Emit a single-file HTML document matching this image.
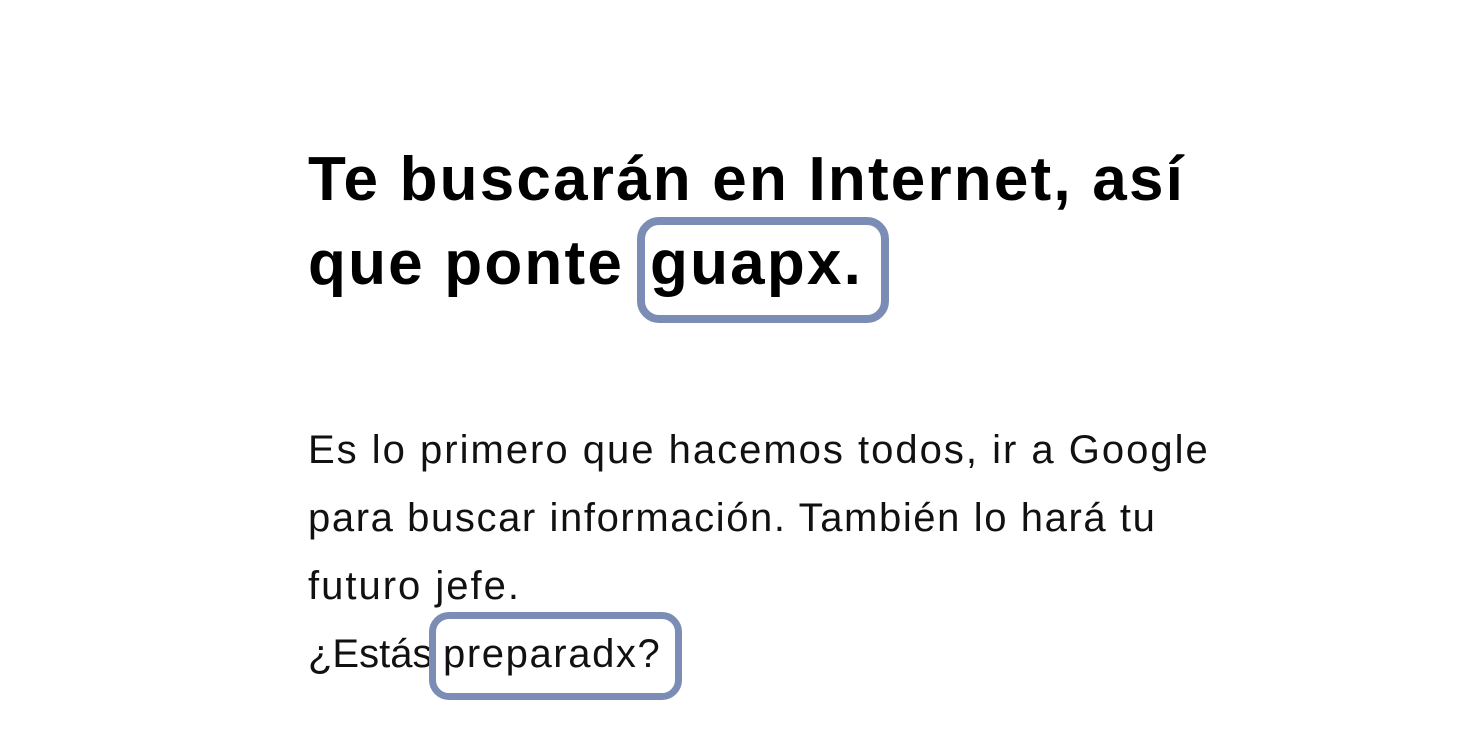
<!DOCTYPE html>
<html><head><meta charset="utf-8"><style>
html,body{margin:0;padding:0;background:#fff;width:1460px;height:736px;overflow:hidden;position:relative;font-family:"Liberation Sans",sans-serif;color:#000}
.h{position:absolute;left:308px;top:138px;font-size:62px;font-weight:bold;line-height:84px;letter-spacing:2.2px;white-space:nowrap}
.p{position:absolute;left:308px;font-size:40px;line-height:68px;white-space:nowrap;letter-spacing:2px;color:#111}
.b{position:absolute;border:8px solid #7b8db5;border-radius:22px;box-sizing:border-box}
</style></head><body>
<div class="h">Te buscarán en Internet, así<br>que ponte <span style="position:absolute;left:342px">guapx.</span></div>
<div class="b" style="left:637px;top:217px;width:252px;height:106px"></div>
<div class="p" style="top:416px">Es lo primero que hacemos todos, ir a Google<br><span style="letter-spacing:1.6px">para buscar información. También lo hará tu</span><br>futuro jefe.</div>
<div class="p" style="top:620px;letter-spacing:0">¿Estás</div>
<div class="p" style="top:620px;left:443px;letter-spacing:1.6px">preparadx?</div>
<div class="b" style="left:429px;top:612px;width:253px;height:88px;border-width:7px;border-radius:20px"></div>
</body></html>
